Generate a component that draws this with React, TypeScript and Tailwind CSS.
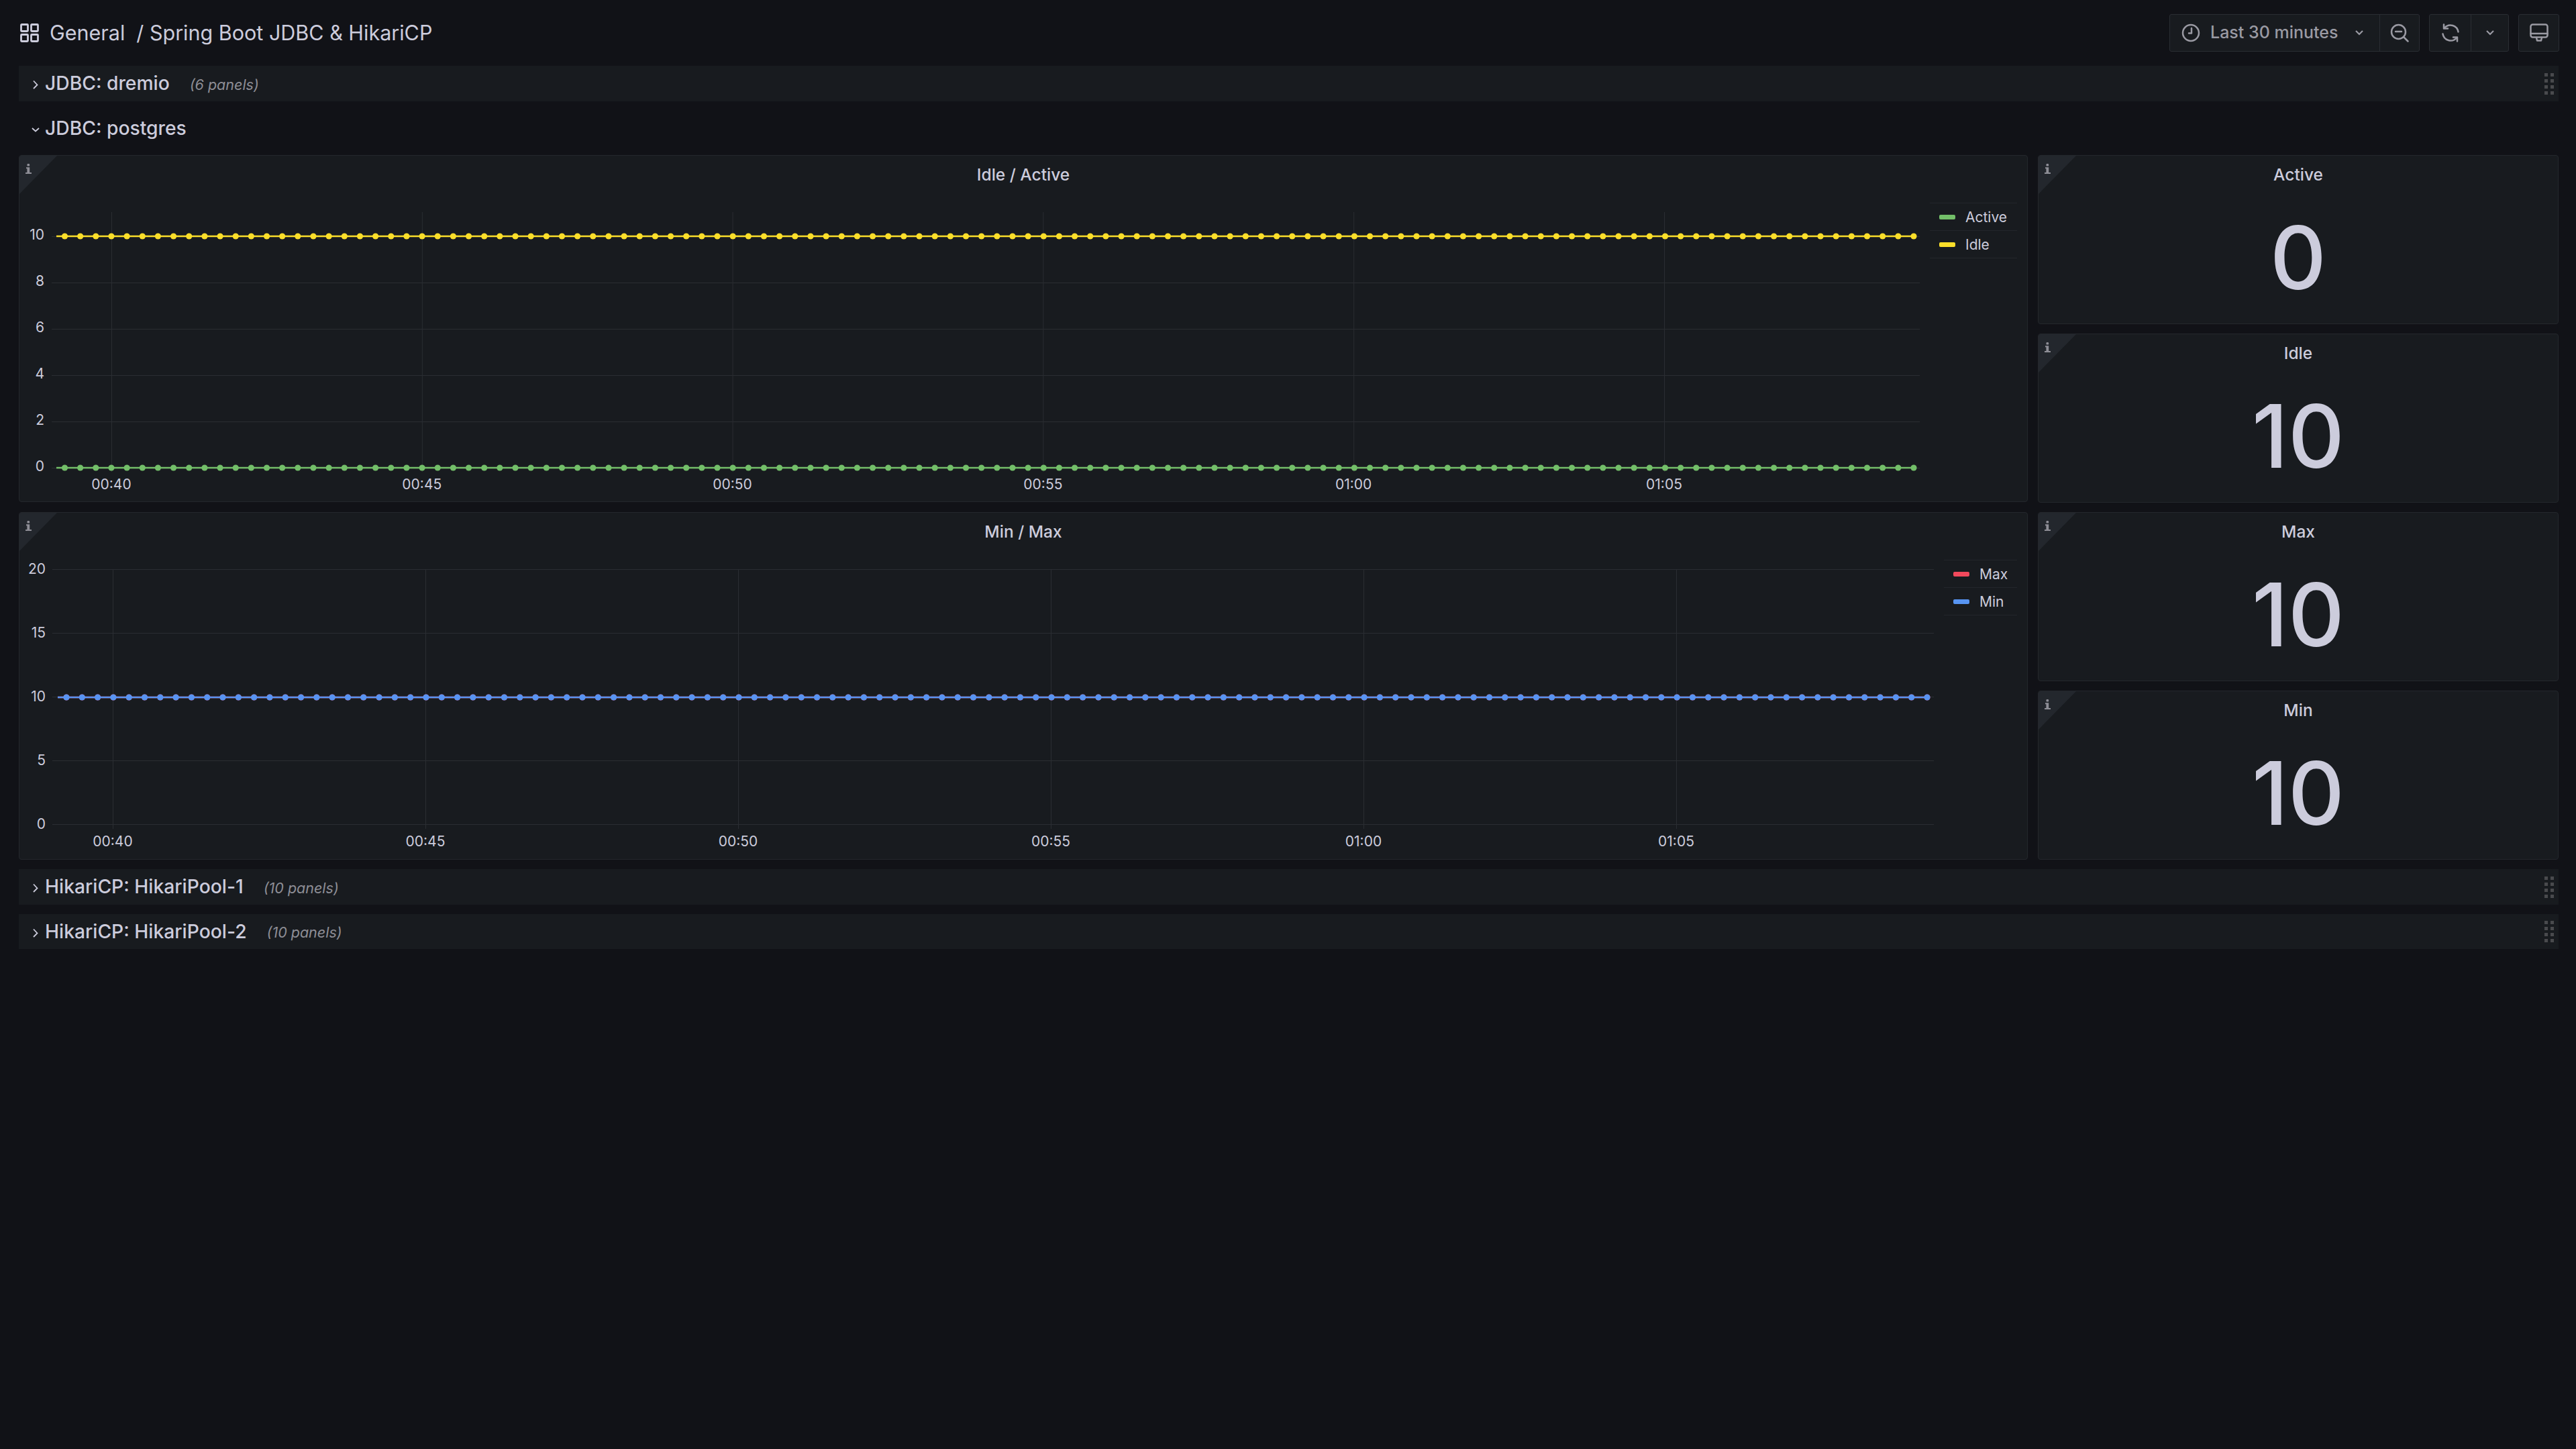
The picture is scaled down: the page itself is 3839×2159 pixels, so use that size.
import React from 'react';

interface Series {
  name: string;
  color: string;
}

interface ChartProps {
  top: number;
  width: number;
  height: number;
  yTicks: { label: string; y: number }[];
  xTicks: { label: string; x: number }[];
  gridRight: number;
  gridLeft: number;
  labelRight: number;
  labelOffset: number;
  vTop: number;
  vBottom: number;
  labelY: number;
  lines: { color: string; y: number; start: number; first: number; last: number }[];
}

const GRID = '#2a2d32';

// Viewbox uses page coordinates so the numbers can be read off the screenshot
const Chart: React.FC<ChartProps> = ({ top, width, height, yTicks, xTicks, gridRight, gridLeft, labelRight, labelOffset, vTop, vBottom, labelY, lines }) => (
  <svg width={width} height={height} viewBox={`29 ${top} ${width} ${height}`} className="block shrink-0">
    {yTicks.map((t) => (
      <g key={t.label}>
        <line x1={gridLeft} x2={gridRight} y1={t.y + 0.5} y2={t.y + 0.5} stroke={GRID} strokeWidth={1} />
        <text x={labelRight} y={t.y + labelOffset} textAnchor="end" fontSize={21} fill="#ccccdc">{t.label}</text>
      </g>
    ))}
    {xTicks.map((t) => (
      <g key={t.label}>
        <line x1={t.x + 0.5} x2={t.x + 0.5} y1={vTop} y2={vBottom} stroke={GRID} strokeWidth={1} />
        <text x={t.x} y={labelY} textAnchor="middle" fontSize={21} fill="#ccccdc">{t.label}</text>
      </g>
    ))}
    {lines.map((l) => (
      <g key={l.color}>
        <line x1={l.start} x2={l.last} y1={l.y} y2={l.y} stroke={l.color} strokeWidth={2.4} />
        {Array.from({ length: 120 }, (_, i) => (
          <circle key={i} cx={l.first + (i * (l.last - l.first)) / 119} cy={l.y} r={4.6} fill={l.color} />
        ))}
      </g>
    ))}
  </svg>
);

const Legend: React.FC<{ items: Series[]; width: string }> = ({ items, width }) => (
  <div className={`mt-[13px] shrink-0 border-t border-[#23262b] ${width}`}>
    {items.map((item) => (
      <div key={item.name} className="flex h-[41px] items-center gap-[15px] border-b border-[#23262b] pl-[14px] text-[21px]">
        <span className="h-[7px] w-[24px] rounded-[2px]" style={{ backgroundColor: item.color }} />
        <span className="mt-[1px]">{item.name}</span>
      </div>
    ))}
  </div>
);

const InfoIcon = () => (
  <svg width="9" height="15" viewBox="0 0 9 15" fill="#8e8e96" className="absolute left-[9px] top-[12px]">
    <rect x="2.5" y="0" width="3.6" height="3.6" rx="1.2" />
    <path d="M1 5.2h5.2v7.8H9v2H0v-2h2.4V7.2H1z" />
  </svg>
);

const Panel: React.FC<{ title: string; className?: string; children: React.ReactNode }> = ({ title, className, children }) => (
  <div className={`relative flex flex-col overflow-hidden rounded-[4px] border border-[#24272c] bg-[#181b1f] ${className ?? ''}`}>
    <div className="absolute left-0 top-0 h-[57px] w-[56px] bg-[#23272d] [clip-path:polygon(0_0,100%_0,0_100%)]" />
    <InfoIcon />
    <div className="flex h-[57px] shrink-0 items-center justify-center text-[24.5px] font-medium">{title}</div>
    {children}
  </div>
);

const Stat: React.FC<{ title: string; value: string }> = ({ title, value }) => (
  <Panel title={title} className="h-[252px]">
    <div className="flex flex-1 items-center justify-center pb-[4px] text-[130px] font-medium leading-none">{value}</div>
  </Panel>
);

const Handle = () => (
  <div className="grid grid-cols-2 gap-x-[4px] gap-y-[4px]">
    {Array.from({ length: 8 }, (_, i) => (
      <span key={i} className="h-[5px] w-[5px] bg-[#494a4d]" />
    ))}
  </div>
);

const Row: React.FC<{ title: string; count?: string; open?: boolean; height: string }> = ({ title, count, open, height }) => (
  <div className={`flex items-center justify-between pl-[19px] pr-[7px] ${height} ${open ? '' : 'bg-[#181b1f]'}`}>
    <div className="flex items-center">
      <svg width="12" height="14" viewBox="0 0 12 14" fill="none" stroke="#ccccdc" strokeWidth="1.8" className="mr-[8px] mt-[3px]">
        {open ? <path d="M1 5l5 4.5L11 5" /> : <path d="M3 1.5L8.5 7.5 3 13" />}
      </svg>
      <span className="text-[28.25px] font-medium">{title}</span>
      {count && <span className="ml-[30px] mt-[3px] text-[21.5px] italic text-[#8e8e96]">{count}</span>}
    </div>
    {!open && <Handle />}
  </div>
);

const IconGrid = () => (
  <svg width="28" height="28" viewBox="0 0 28 28" fill="none" stroke="#ccccdc" strokeWidth="2.8">
    <rect x="1.5" y="1.5" width="10" height="10" rx="1" />
    <rect x="16.5" y="1.5" width="10" height="10" rx="1" />
    <rect x="1.5" y="16.5" width="10" height="10" rx="1" />
    <rect x="16.5" y="16.5" width="10" height="10" rx="1" />
  </svg>
);

const ToolbarIcon: React.FC<{ children: React.ReactNode }> = ({ children }) => (
  <svg width="28" height="28" viewBox="0 0 28 28" fill="none" stroke="#9a9aa3" strokeWidth="2.5" strokeLinecap="round" strokeLinejoin="round">
    {children}
  </svg>
);

const Chevron = () => (
  <svg width="14" height="10" viewBox="0 0 14 10" fill="none" stroke="#9a9aa3" strokeWidth="2.2">
    <path d="M2 2l5 5 5-5" />
  </svg>
);

const BTN = 'flex h-[56px] items-center justify-center rounded-[3px] border border-[#2a2d33] bg-[#181b1f]';

const xLabels = ['00:40', '00:45', '00:50', '00:55', '01:00', '01:05'];

export default function App() {
  return (
    <div className="min-h-[2159px] bg-[#111217] font-['Inter',sans-serif] text-[#ccccdc]">
      <header className="flex h-[98px] items-center justify-between pl-[30px] pr-[25px]">
        <div className="flex items-center text-[30.5px]">
          <IconGrid />
          <span className="ml-[16px]">General</span>
          <span className="ml-[17px]">/ Spring Boot JDBC &amp; HikariCP</span>
        </div>
        <div className="flex items-center">
          <div className={`${BTN} w-[373px] justify-start`}>
            <div className="flex w-[312px] items-center pl-[17px]">
              <ToolbarIcon>
                <circle cx="14" cy="14" r="12" />
                <path d="M15 7v7.5h-4" />
              </ToolbarIcon>
              <span className="ml-[15px] text-[25px] font-medium text-[#9a9aa3]">Last 30 minutes</span>
              <span className="ml-[25px] flex"><Chevron /></span>
            </div>
            <div className="flex h-full flex-1 items-center justify-center border-l border-[#2a2d33]">
              <ToolbarIcon>
                <circle cx="12.5" cy="12.5" r="10.5" />
                <path d="M8 12h9M20.5 20.5l6 6" />
              </ToolbarIcon>
            </div>
          </div>
          <div className={`${BTN} ml-[14px] w-[119px] justify-start`}>
            <div className="flex h-full w-[61px] items-center justify-center">
              <ToolbarIcon>
                <path d="M25.5 12.5A11.8 11.8 0 0 0 5 6.5" />
                <path d="M2.5 15.5A11.8 11.8 0 0 0 23 21.5" />
                <path d="M4 1.5v6h6M24 26.5v-6h-6" />
              </ToolbarIcon>
            </div>
            <div className="flex h-full flex-1 items-center justify-center border-l border-[#2a2d33]">
              <Chevron />
            </div>
          </div>
          <div className={`${BTN} ml-[14px] w-[61px]`}>
            <ToolbarIcon>
              <rect x="1.5" y="1.5" width="25" height="19" rx="3" />
              <path d="M1.5 15h25M10 21l1 4.5h6l1-4.5" />
            </ToolbarIcon>
          </div>
        </div>
      </header>

      <main className="flex flex-col gap-[14px] pl-[28px] pr-[26px]">
        <Row title="JDBC: dremio" count="(6 panels)" height="h-[53px]" />
        <Row title="JDBC: postgres" open height="h-[52px]" />

        <div className="grid grid-cols-[2994px_776px] gap-x-[15px]">
          <div className="flex flex-col gap-[15px]">
            <Panel title="Idle / Active" className="h-[517px]">
              <div className="flex flex-1 justify-between pr-[15px]">
                <Chart
                  top={289}
                  width={2847}
                  height={458}
                  gridLeft={77}
                  gridRight={2861}
                  labelRight={66}
                  labelOffset={5}
                  vTop={316}
                  vBottom={703}
                  labelY={729}
                  yTicks={[10, 8, 6, 4, 2, 0].map((v) => ({ label: String(v), y: 697 - v * 34.5 }))}
                  xTicks={xLabels.map((label, i) => ({ label, x: 166 + i * 462.8 }))}
                  lines={[
                    { color: '#73bf69', y: 697, start: 84, first: 96.5, last: 2852 },
                    { color: '#fade2a', y: 352, start: 84, first: 96.5, last: 2852 },
                  ]}
                />
                <Legend width="w-[130px]" items={[{ name: 'Active', color: '#73bf69' }, { name: 'Idle', color: '#fade2a' }]} />
              </div>
            </Panel>
            <Panel title="Min / Max" className="h-[518px]">
              <div className="flex flex-1 justify-between pr-[15px]">
                <Chart
                  top={821}
                  width={2868}
                  height={458}
                  gridLeft={78}
                  gridRight={2882}
                  labelRight={68}
                  labelOffset={6.5}
                  vTop={848}
                  vBottom={1235}
                  labelY={1261}
                  yTicks={[20, 15, 10, 5, 0].map((v) => ({ label: String(v), y: 1228 - v * 19 }))}
                  xTicks={xLabels.map((label, i) => ({ label, x: 168 + i * 466 }))}
                  lines={[
                    { color: '#f2495c', y: 1039, start: 86, first: 99, last: 2872 },
                    { color: '#5794f2', y: 1039, start: 86, first: 99, last: 2872 },
                  ]}
                />
                <Legend width="w-[109px]" items={[{ name: 'Max', color: '#f2495c' }, { name: 'Min', color: '#5794f2' }]} />
              </div>
            </Panel>
          </div>
          <div className="flex flex-col gap-[14px]">
            <Stat title="Active" value="0" />
            <Stat title="Idle" value="10" />
            <Stat title="Max" value="10" />
            <Stat title="Min" value="10" />
          </div>
        </div>

        <Row title="HikariCP: HikariPool-1" count="(10 panels)" height="h-[53px]" />
        <Row title="HikariCP: HikariPool-2" count="(10 panels)" height="h-[52px]" />
      </main>
    </div>
  );
}
